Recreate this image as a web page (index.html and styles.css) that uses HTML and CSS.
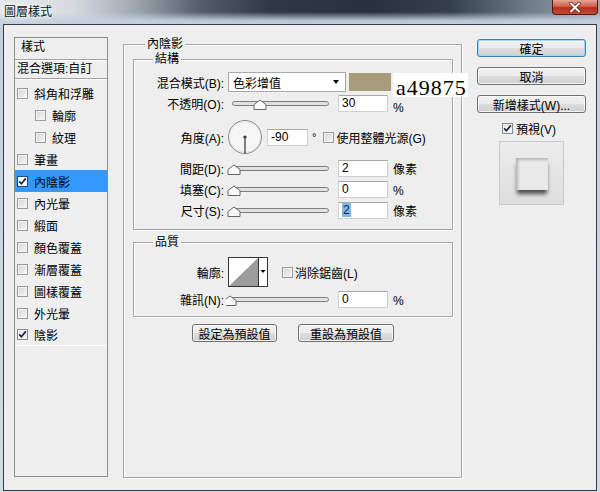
FILE: index.html
```html
<!DOCTYPE html>
<html lang="zh-Hant">
<head>
<meta charset="utf-8">
<title>圖層樣式</title>
<link rel="stylesheet" href="styles.css">
</head>
<body>
<div class="window">
  <div class="titlebar">
    <span class="title">圖層樣式</span>
    <span class="close"><svg width="14" height="11" viewBox="0 0 14 11"><path d="M3 1.5 L11 9.5 M11 1.5 L3 9.5" stroke="#5a1b12" stroke-width="3.4" stroke-linecap="round"/><path d="M3 1.5 L11 9.5 M11 1.5 L3 9.5" stroke="#fff" stroke-width="2" stroke-linecap="round"/></svg></span>
  </div>
  <div class="client">
    <div class="styles-panel">
      <div class="sp-head">樣式</div>
      <div class="sp-blend">混合選項:自訂</div>
      <ul class="sp-list">
        <li class="sp-item"><span class="cb"></span>斜角和浮雕</li>
        <li class="sp-item sub"><span class="cb"></span>輪廓</li>
        <li class="sp-item sub"><span class="cb"></span>紋理</li>
        <li class="sp-item"><span class="cb"></span>筆畫</li>
        <li class="sp-item selected"><span class="cb checked"><svg width="9" height="9" viewBox="0 0 9 9"><path d="M1.2 4.4 L3.4 6.8 L7.8 1.4" fill="none" stroke="#1b2540" stroke-width="1.7"/></svg></span>內陰影</li>
        <li class="sp-item"><span class="cb"></span>內光暈</li>
        <li class="sp-item"><span class="cb"></span>緞面</li>
        <li class="sp-item"><span class="cb"></span>顏色覆蓋</li>
        <li class="sp-item"><span class="cb"></span>漸層覆蓋</li>
        <li class="sp-item"><span class="cb"></span>圖樣覆蓋</li>
        <li class="sp-item"><span class="cb"></span>外光暈</li>
        <li class="sp-item"><span class="cb checked"><svg width="9" height="9" viewBox="0 0 9 9"><path d="M1.2 4.4 L3.4 6.8 L7.8 1.4" fill="none" stroke="#1b2540" stroke-width="1.7"/></svg></span>陰影</li>
      </ul>
    </div>

    <fieldset class="group outer">
      <legend>內陰影</legend>
      <fieldset class="group inner structure">
        <legend>結構</legend>
        <div class="row r-blend">
          <span class="lbl">混合模式(B):</span>
          <div class="select"><span>色彩增值</span><span class="caret"></span></div>
          <span class="swatch"></span>
        </div>
        <div class="row r-opacity">
          <span class="lbl">不透明(O):</span>
          <svg class="slider" width="104" height="17" viewBox="0 0 104 17"><rect x="6.5" y="6.5" width="96" height="4" rx="2" fill="#e2e2e2" stroke="#7d7d7d"/><path d="M34 5 L40 9.5 V14.5 H28 V9.5 Z" fill="#fafafa" stroke="#666"/></svg>
          <span class="num">30</span><span class="unit unit-low">%</span>
        </div>
        <div class="row r-angle">
          <span class="lbl">角度(A):</span>
          <svg class="dial" width="38" height="36" viewBox="0 0 38 36"><circle cx="19" cy="18" r="16.5" fill="#f6f6f6" stroke="#8a8a8a"/><circle cx="19" cy="18" r="15.5" fill="none" stroke="#e2e2e2"/><line x1="19" y1="18" x2="19" y2="34.5" stroke="#333" stroke-width="1.2"/><circle cx="19" cy="18" r="1.6" fill="#333"/></svg>
          <span class="num num-sm">-90</span><span class="deg">°</span>
          <span class="cb cb-light"></span><span class="cb-text">使用整體光源(G)</span>
        </div>
        <div class="row r-distance">
          <span class="lbl">間距(D):</span>
          <svg class="slider" width="104" height="17" viewBox="0 0 104 17"><rect x="6.5" y="6.5" width="96" height="4" rx="2" fill="#e2e2e2" stroke="#7d7d7d"/><path d="M8 5 L14 9.5 V14.5 H2 V9.5 Z" fill="#fafafa" stroke="#666"/></svg>
          <span class="num">2</span><span class="unit">像素</span>
        </div>
        <div class="row r-choke">
          <span class="lbl">填塞(C):</span>
          <svg class="slider" width="104" height="17" viewBox="0 0 104 17"><rect x="6.5" y="6.5" width="96" height="4" rx="2" fill="#e2e2e2" stroke="#7d7d7d"/><path d="M8 5 L14 9.5 V14.5 H2 V9.5 Z" fill="#fafafa" stroke="#666"/></svg>
          <span class="num">0</span><span class="unit">%</span>
        </div>
        <div class="row r-size">
          <span class="lbl">尺寸(S):</span>
          <svg class="slider" width="104" height="17" viewBox="0 0 104 17"><rect x="6.5" y="6.5" width="96" height="4" rx="2" fill="#e2e2e2" stroke="#7d7d7d"/><path d="M8 5 L14 9.5 V14.5 H2 V9.5 Z" fill="#fafafa" stroke="#666"/></svg>
          <span class="num"><span class="sel">2</span></span><span class="unit">像素</span>
        </div>
      </fieldset>

      <fieldset class="group inner quality">
        <legend>品質</legend>
        <div class="row r-contour">
          <span class="lbl">輪廓:</span>
          <svg class="contour" width="40" height="30" viewBox="0 0 40 30"><rect x="0.5" y="0.5" width="39" height="29" fill="#fff" stroke="#333"/><polygon points="1,29 30,1 30,29" fill="#9c9c9c"/><line x1="30.5" y1="0" x2="30.5" y2="30" stroke="#333"/><polygon points="32.5,13 37.5,13 35,16" fill="#000"/></svg>
          <span class="cb cb-light aa"></span><span class="cb-text">消除鋸齒(L)</span>
        </div>
        <div class="row r-noise">
          <span class="lbl">雜訊(N):</span>
          <svg class="slider" width="104" height="17" viewBox="0 0 104 17"><rect x="4.5" y="6.5" width="98" height="4" rx="2" fill="#e2e2e2" stroke="#7d7d7d"/><path d="M4 5 L10 9.5 V14.5 H-2 V9.5 Z" fill="#fafafa" stroke="#666"/></svg>
          <span class="num">0</span><span class="unit">%</span>
        </div>
      </fieldset>

      <div class="default-buttons">
        <button class="btn btn-set">設定為預設值</button>
        <button class="btn btn-reset">重設為預設值</button>
      </div>
    </fieldset>

    <div class="side">
      <button class="btn btn-ok">確定</button>
      <button class="btn">取消</button>
      <button class="btn">新增樣式(W)...</button>
      <div class="preview-check"><span class="cb checked"><svg width="9" height="9" viewBox="0 0 9 9"><path d="M1.2 4.4 L3.4 6.8 L7.8 1.4" fill="none" stroke="#1b2540" stroke-width="1.7"/></svg></span><span>預視(V)</span></div>
      <div class="preview"><div class="preview-square"></div></div>
    </div>
  </div>
  <div class="hexnote">a49875</div>
</div>
</body>
</html>
```

FILE: styles.css
```css
* { box-sizing: border-box; }
html, body { margin: 0; padding: 0; }
body {
  width: 600px;
  height: 492px;
  overflow: hidden;
  font-family: "Liberation Sans", "Noto Sans CJK TC", sans-serif;
  font-size: 12px;
  color: #000;
  background: #c6d3df;
}
.window {
  position: relative;
  width: 600px;
  height: 492px;
  display: flex;
  flex-direction: column;
  background: linear-gradient(to bottom, #c3d0dc, #cfdbe5);
}
.titlebar {
  flex: none;
  height: 24px;
  display: flex;
  justify-content: space-between;
  align-items: flex-start;
  background:
    linear-gradient(to bottom, rgba(196,210,223,0) 0%, rgba(196,210,223,0) 50%, rgba(196,210,223,0.9) 85%, #c3d0dc 100%),
    linear-gradient(to right, #e6e9ec 0%, #d7dbdf 12%, #a2abb4 22%, #56606b 33%, #2f3944 45%, #28323d 62%, #34404c 75%, #6f7b88 88%, #9aa6b2 100%);
}
.title {
  padding-left: 4px;
  line-height: 24px;
  color: #0d1620;
  text-shadow: 0 0 4px #fff, 0 0 7px rgba(255,255,255,0.9);
}
.close {
  width: 46px;
  height: 15px;
  margin-right: 2px;
  border: 1px solid #4e1a14;
  border-top: none;
  border-radius: 0 0 4px 4px;
  background: linear-gradient(to bottom, #e8a596 0%, #d0614d 45%, #b5301c 55%, #c64a34 100%);
  display: flex;
  align-items: center;
  justify-content: center;
}
.client {
  flex: none;
  margin: 0 3px 0 3px;
  height: 467px;
  border: 1px solid #333b44;
  background: #eeeeee;
  display: flex;
  align-items: flex-start;
  gap: 15px;
  padding: 12px 0 0 10px;
}

/* left styles list */
.styles-panel {
  flex: none;
  width: 94px;
  height: 440px;
  border: 1px solid #8d8d8d;
  background: #efefef;
}
.sp-head {
  height: 22px;
  padding: 1px 0 0 6px;
  line-height: 16px;
  border-bottom: 1px solid #a3a3a3;
  box-shadow: 0 1px 0 #fff;
}
.sp-blend {
  height: 19px;
  padding: 2px 0 0 2px;
  line-height: 15px;
  border-bottom: 1px solid #a3a3a3;
  box-shadow: 0 1px 0 #fff;
}
.sp-list {
  list-style: none;
  margin: 0;
  padding: 3px 0 0 0;
}
.sp-item {
  height: 22px;
  display: flex;
  align-items: center;
  gap: 6px;
  padding-left: 2px;
}
.sp-item:last-child { border-bottom: 1px solid #fff; }
.sp-item.sub { padding-left: 20px; }
.sp-item.selected { background: #3399ff; }

.cb {
  flex: none;
  width: 11px;
  height: 11px;
  border: 1px solid #9a9a9a;
  background: linear-gradient(135deg, #d6d6d6, #f6f6f6);
  box-shadow: inset 0 0 0 1px #f3f3f3;
  display: inline-flex;
  align-items: center;
  justify-content: center;
}
.cb.checked { background: linear-gradient(135deg, #e4e4e4, #ffffff); border-color: #8a8a8a; }
.sp-item.selected .cb { background: #fff; border-color: #1d4f86; }

/* fieldsets */
.group {
  margin: 0;
  border: 1px solid #a6a6a6;
  box-shadow: 1px 1px 0 #fff, inset 1px 1px 0 #fff;
  min-width: 0;
}
.group legend {
  padding: 0 2px;
  line-height: 14px;
  background: #eeeeee;
}
.outer {
  flex: none;
  width: 339px;
  height: 441px;
  padding: 1px 8px 0 9px;
}
.outer > legend { margin-left: 12px; }
.inner {
  width: 320px;
  padding: 6px 0 10px 0;
}
.inner > legend { margin-left: 19px; }
.quality { margin-top: 5px; padding: 8px 0 8px 0; }

.row {
  display: flex;
  align-items: center;
  height: 17px;
}
.lbl {
  flex: none;
  width: 90px;
  text-align: right;
  white-space: nowrap;
}
.r-blend { height: 20px; }
.r-opacity { margin-top: 3px; }
.r-angle { margin-top: 7px; height: 36px; }
.r-distance { margin-top: 5px; }
.r-choke { margin-top: 4px; }
.r-size { margin-top: 4px; }
.r-contour { height: 30px; }
.r-noise { margin-top: 4px; }

.select {
  flex: none;
  margin-left: 4px;
  width: 118px;
  height: 20px;
  background: #fff;
  border: 1px solid #a9a9a9;
  display: flex;
  align-items: center;
  justify-content: space-between;
  padding: 0 6px 0 4px;
}
.caret {
  width: 0;
  height: 0;
  border-left: 3.5px solid transparent;
  border-right: 3.5px solid transparent;
  border-top: 4px solid #000;
}
.swatch {
  flex: none;
  margin-left: 3px;
  width: 42px;
  height: 18px;
  background: #a89c7b;
}
.slider { flex: none; margin-left: 2px; display: block; }
.dial { flex: none; margin-left: 2px; display: block; }
.contour { flex: none; margin-left: 4px; display: block; }
.num {
  flex: none;
  margin-left: 8px;
  width: 50px;
  height: 17px;
  background: #fff;
  border: 1px solid #cfcfcf;
  border-top-color: #a9a9a9;
  padding-left: 3px;
  line-height: 15px;
}
.num-sm { margin-left: 3px; width: 41px; }
.sel { background: #7fb8e8; color: #0e2c55; padding: 0 1px; }
.unit { margin-left: 5px; line-height: 12px; margin-top: 2px; }
.unit-low { margin-top: 8px; }
.deg { margin-left: 4px; font-size: 11px; }
.cb-light { margin-left: 7px; }
.aa { margin-left: 14px; }
.cb-text { margin-left: 2px; white-space: nowrap; }

.default-buttons {
  display: flex;
  gap: 21px;
  margin-top: 7px;
  padding-left: 59px;
}

/* buttons */
.btn {
  height: 18px;
  padding: 0;
  margin: 0;
  font: inherit;
  color: #000;
  border: 1px solid #707070;
  border-radius: 3px;
  background: linear-gradient(to bottom, #f2f2f2 0%, #ebebeb 50%, #dddddd 51%, #cfcfcf 100%);
  box-shadow: inset 0 0 0 1px rgba(255,255,255,0.75);
  display: flex;
  align-items: center;
  justify-content: center;
  white-space: nowrap;
}
.btn-set { width: 85px; }
.btn-reset { width: 96px; }

.side {
  flex: none;
  width: 109px;
  margin-top: 2px;
  display: flex;
  flex-direction: column;
  gap: 10px;
}
.side .btn { width: 109px; }
.btn-ok {
  border-color: #3c7fb1;
  box-shadow: inset 0 0 0 1px #9fdcf3;
}
.preview-check {
  display: flex;
  align-items: center;
  gap: 3px;
  height: 14px;
  padding-left: 25px;
  margin-top: -2px;
}
.preview {
  margin-top: -4px;
  margin-left: 22px;
  width: 65px;
  height: 64px;
  border: 1px solid #c9c9c9;
  background: linear-gradient(to bottom, #ececec, #dedede);
  display: flex;
  justify-content: center;
  padding-top: 16px;
}
.preview-square {
  width: 32px;
  height: 32px;
  background: #e9e9e9;
  box-shadow: 0 5px 4px -1px rgba(0,0,0,0.65), inset 2px 2px 3px rgba(0,0,0,0.22);
}

/* annotation over the dialog */
.hexnote {
  position: absolute;
  left: 393px;
  top: 73px;
  width: 75px;
  height: 24px;
  background: #fff;
  font-family: "Liberation Serif", serif;
  font-size: 22px;
  letter-spacing: 1px;
  line-height: 16px;
  padding: 7px 0 0 3px;
  color: #000;
}
```
